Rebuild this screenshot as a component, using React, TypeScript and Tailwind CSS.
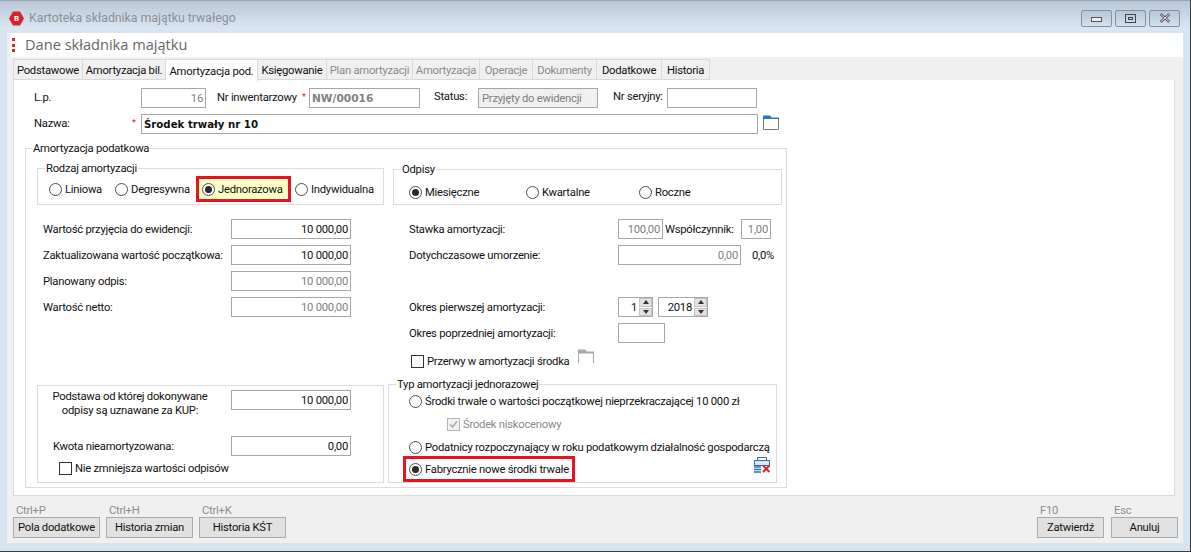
import { ReactNode } from "react";

const tabs = [
  { label: "Podstawowe", w: "w-[70px]" },
  { label: "Amortyzacja bil.", w: "w-[83px]" },
  { label: "Amortyzacja pod.", w: "w-[92px]", active: true },
  { label: "Księgowanie", w: "w-[69px]" },
  { label: "Plan amortyzacji", w: "w-[86px]", off: true },
  { label: "Amortyzacja", w: "w-[67px]", off: true },
  { label: "Operacje", w: "w-[53px]", off: true },
  { label: "Dokumenty", w: "w-[64px]", off: true },
  { label: "Dodatkowe", w: "w-[65px]" },
  { label: "Historia", w: "w-[48px]" },
];

function Radio({ on }: { on?: boolean }) {
  return (
    <span className="w-[13px] h-[13px] shrink-0 rounded-full border border-[#4d4d4d] bg-white flex items-center justify-center">
      {on && <span className="w-[7px] h-[7px] rounded-full bg-[#2a2a2a]" />}
    </span>
  );
}

function Option({ on, label, className = "" }: { on?: boolean; label: string; className?: string }) {
  return (
    <div className={`flex items-center gap-[3px] ${className}`}>
      <Radio on={on} />
      <span>{label}</span>
    </div>
  );
}

function Check({ label, checked, off }: { label: string; checked?: boolean; off?: boolean }) {
  return (
    <div className={`flex items-center gap-[3px] ${off ? "text-[#8a8a8a]" : ""}`}>
      <span className={`w-[13px] h-[13px] shrink-0 border flex items-center justify-center ${off ? "border-[#b5b5b5] bg-[#f2f2f2]" : "border-[#333333] bg-white"}`}>
        {checked && (
          <svg width="11" height="11" viewBox="0 0 11 11" fill="none">
            <path d="M2 5.5l2.5 2.5L9 2.5" stroke="#a8a8a8" strokeWidth="1.6" />
          </svg>
        )}
      </span>
      <span>{label}</span>
    </div>
  );
}

function Input({ value, w, off }: { value?: string; w: string; off?: boolean }) {
  return (
    <div className={`${w} h-[20px] shrink-0 border border-[#a6a6a6] flex items-center justify-end pr-[2px] ${off ? "text-[#808080]" : ""}`}>
      {value}
    </div>
  );
}

function Spin({ value, w }: { value: string; w: string }) {
  return (
    <div className={`${w} h-[20px] border border-[#a6a6a6] flex items-center justify-end`}>
      <span className="pr-[1px]">{value}</span>
      <div className="w-[13px] h-[18px] ml-[1px] flex flex-col gap-[1px]">
        <span className="flex-1 bg-[#e3e3e3] border border-[#c4c4c4] flex items-center justify-center">
          <span className="w-0 h-0 border-x-[3px] border-x-transparent border-b-[4px] border-b-[#333333]" />
        </span>
        <span className="flex-1 bg-[#e3e3e3] border border-[#c4c4c4] flex items-center justify-center">
          <span className="w-0 h-0 border-x-[3px] border-x-transparent border-t-[4px] border-t-[#333333]" />
        </span>
      </div>
    </div>
  );
}

function Group({ title, className, legend = "left-[7px]", children }: { title: string; className: string; legend?: string; children: ReactNode }) {
  return (
    <div className={`relative border border-[#dcdcdc] ${className}`}>
      <span className={`absolute ${legend} -top-[7px] bg-white px-[1px] leading-[13px]`}>{title}</span>
      {children}
    </div>
  );
}

function Row({ label, children, className = "" }: { label: string; children: ReactNode; className?: string }) {
  return (
    <div className={`flex items-center h-[20px] ${className}`}>
      <span className="w-[194px] pl-[6px] shrink-0">{label}</span>
      {children}
    </div>
  );
}

function BlueFolder() {
  return (
    <svg width="17" height="15" viewBox="0 0 17 15" fill="none">
      <path d="M0.5 3.5h15v11h-15z" stroke="#6d7f8d" fill="#ffffff" />
      <path d="M0 0.5h7l2 2.5H0z" fill="#2f76b8" />
      <path d="M0 2.5h16v1.5H0z" fill="#2f76b8" />
    </svg>
  );
}

function GrayFolder() {
  return (
    <svg width="16" height="14" viewBox="0 0 16 14" fill="none">
      <path d="M0.5 14V3M15.5 14V3" stroke="#a8a8a8" />
      <path d="M0 0.5h7l2 2H16v2H0z" fill="#a8a8a8" />
    </svg>
  );
}

function BottomButton({ hint, label, w }: { hint: string; label: string; w: string }) {
  return (
    <div className={`${w} flex flex-col`}>
      <span className="pl-[3px] text-[#8c8c8c] h-[14px] leading-[16px]">{hint}</span>
      <button className="h-[21px] border border-[#ababab] bg-[#e1e1e1] leading-none">{label}</button>
    </div>
  );
}

export default function App() {
  return (
    <div className="w-[1191px] h-[552px] overflow-hidden flex flex-col bg-[#d7e4f1] border-b border-r border-[#3a3a3a] text-[11.25px] tracking-[-0.25px] leading-[15px] whitespace-nowrap text-[#111111] font-['Roboto',sans-serif]">
      {/* title bar */}
      <div className="h-[30px] shrink-0 flex items-center justify-between pl-[9px] pr-[10px] pt-[5px] border-t border-[#9aa7b3] bg-gradient-to-b from-[#b9c8d8] to-[#dbe7f3]">
        <div className="flex items-center gap-[5px]">
          <div className="relative w-[15px] h-[15px]">
            <svg width="15" height="15" viewBox="0 0 15 15">
              <polygon points="4,0.5 11,0.5 15,7.5 11,14.5 4,14.5 0,7.5" fill="#d8232a" />
            </svg>
            <span className="absolute inset-0 flex items-center justify-center text-white text-[8px] font-bold">B</span>
          </div>
          <span className="text-[#8b8f94] text-[12.3px] tracking-normal">Kartoteka składnika majątku trwałego</span>
        </div>
        <div className="flex gap-[3px]">
          <button className="w-[31px] h-[17px] border border-[#8190a8] rounded-[2px] flex items-center justify-center bg-gradient-to-b from-[#b6c6d8] to-[#d3e0ee]">
            <span className="w-[11px] h-[5px] mt-[2px] border border-[#555555] bg-[#eeeeee]" />
          </button>
          <button className="w-[31px] h-[17px] border border-[#8190a8] rounded-[2px] flex items-center justify-center bg-gradient-to-b from-[#b6c6d8] to-[#d3e0ee]">
            <span className="w-[11px] h-[9px] border border-[#444444] flex items-center justify-center">
              <span className="w-[5px] h-[3px] border border-[#444444]" />
            </span>
          </button>
          <button className="w-[31px] h-[17px] border border-[#8190a8] rounded-[2px] flex items-center justify-center bg-gradient-to-b from-[#b6c6d8] to-[#d3e0ee]">
            <svg width="12" height="10" viewBox="0 0 12 10">
              <path d="M1.5 1l9 8M10.5 1l-9 8" stroke="#555566" strokeWidth="2.4" />
              <path d="M1.5 1l9 8M10.5 1l-9 8" stroke="#f2f2f2" strokeWidth="0.9" />
            </svg>
          </button>
        </div>
      </div>

      {/* client */}
      <div className="flex-1 ml-[7px] mr-[7px] mt-[3px] mb-[8px] bg-[#f0f0f0] flex flex-col">
        <div className="h-[24px] ml-[3px] bg-white flex items-center">
          <div className="flex flex-col gap-[2.5px] ml-[2px]">
            <span className="w-[3px] h-[3px] bg-[#e2231a]" />
            <span className="w-[3px] h-[3px] bg-[#e2231a]" />
            <span className="w-[3px] h-[3px] bg-[#e2231a]" />
          </div>
          <span className="ml-[10px] -mt-[2px] text-[14.6px] tracking-normal font-medium text-[#666666] font-['Open_Sans',sans-serif]">Dane składnika majątku</span>
        </div>

        {/* tabs */}
        <div className="h-[23px] ml-[6px] mr-[8px] pt-[2px] flex items-stretch">
          {tabs.map((t) => (
            <div
              key={t.label}
              className={`${t.w} shrink-0 flex items-center justify-center pt-[1px] border border-[#d9d9d9] border-l-0 first:border-l ${
                t.active ? "bg-white border-b-0 relative z-10 h-[22px]" : ""
              } ${t.off ? "text-[#8a8a8a]" : ""}`}
            >
              {t.label}
            </div>
          ))}
        </div>

        {/* panel */}
        <div className="h-[416px] ml-[6px] mr-[8px] bg-white border border-[#d9d9d9] border-t-0 pt-[8px] pl-[11px]">
          <div className="flex items-center h-[20px]">
            <span className="w-[116px] pl-[9px] -mt-[2px]">L.p.</span>
            <Input value="16" w="w-[65px]" off />
            <span className="ml-[11px] w-[85px] -mt-[2px]">Nr inwentarzowy</span>
            <span className="w-[7px] text-[#e2231a] text-[9px] -mt-[2px]">*</span>
            <div className="w-[111px] h-[20px] border border-[#a6a6a6] flex items-center pl-[2px] font-bold tracking-normal text-[#808080] text-[10.6px] font-['DejaVu_Sans',sans-serif]">NW/00016</div>
            <span className="ml-[14px] w-[44px] -mt-[3px]">Status:</span>
            <div className="w-[120px] h-[20px] border border-[#a6a6a6] bg-[#f0f0f0] pl-[3px] flex items-center text-[#808080]">Przyjęty do ewidencji</div>
            <span className="ml-[15px] w-[54px] -mt-[3px]">Nr seryjny:</span>
            <Input w="w-[90px]" />
          </div>
          <div className="flex items-center h-[20px] mt-[6px]">
            <span className="w-[107px] pl-[9px] -mt-[2px]">Nazwa:</span>
            <span className="w-[9px] text-[#e2231a] text-[9px] -mt-[2px]">*</span>
            <div className="w-[617px] h-[20px] border border-[#a6a6a6] flex items-center pl-[2px] font-bold tracking-normal font-['DejaVu_Sans',sans-serif] text-[10.2px]">Środek trwały nr 10</div>
            <span className="ml-[5px] -mt-[3px] flex">
              <BlueFolder />
            </span>
          </div>

          <Group title="Amortyzacja podatkowa" className="w-[762px] h-[340px] mt-[14px] pl-[11px] pr-[4px] pt-[19px]" legend="left-[6px]">
            <div className="flex gap-[4px]">
              {/* left column */}
              <div className="w-[347px] shrink-0 flex flex-col">
                <Group title="Rodzaj amortyzacji" className="h-[37px] flex items-center pl-[11px] pt-[5px]">
                  <Option label="Liniowa" className="w-[66px]" />
                  <Option label="Degresywna" className="w-[81px]" />
                  <div className="w-[95px] h-[26px] border-[3px] border-[#e6141e] bg-[#ffffc8] flex items-center pl-[3px] mr-[4px]">
                    <Option on label="Jednorazowa" />
                  </div>
                  <Option label="Indywidualna" />
                </Group>
                <Row label="Wartość przyjęcia do ewidencji:" className="mt-[14px]">
                  <Input value="10 000,00" w="w-[120px]" />
                </Row>
                <Row label="Zaktualizowana wartość początkowa:" className="mt-[6px]">
                  <Input value="10 000,00" w="w-[120px]" />
                </Row>
                <Row label="Planowany odpis:" className="mt-[6px]">
                  <Input value="10 000,00" w="w-[120px]" off />
                </Row>
                <Row label="Wartość netto:" className="mt-[6px]">
                  <Input value="10 000,00" w="w-[120px]" off />
                </Row>
                <div className="mt-[68px] h-[98px] border border-[#dcdcdc] pt-[4px]">
                  <div className="flex">
                    <div className="w-[193px] pr-[9px] text-center leading-[14px]">
                      Podstawa od której dokonywane
                      <br />
                      odpisy są uznawane za KUP:
                    </div>
                    <Input value="10 000,00" w="w-[120px]" />
                  </div>
                  <div className="flex items-center mt-[18px]">
                    <span className="w-[193px] pl-[15px]">Kwota nieamortyzowana:</span>
                    <Input value="0,00" w="w-[120px]" />
                  </div>
                  <div className="pl-[21px] mt-[5px]">
                    <Check label="Nie zmniejsza wartości odpisów" />
                  </div>
                </div>
              </div>

              {/* right column */}
              <div className="w-[389px] shrink-0 flex flex-col">
                <Group title="Odpisy" className="h-[36px] ml-[5px] -mr-[5px] flex items-center pl-[15px] mt-[1px] pt-[10px]">
                  <Option on label="Miesięczne" className="w-[117px]" />
                  <Option label="Kwartalne" className="w-[113px]" />
                  <Option label="Roczne" />
                </Group>
                <div className="flex items-center h-[20px] mt-[14px]">
                  <span className="w-[230px] pl-[21px]">Stawka amortyzacji:</span>
                  <Input value="100,00" w="w-[45px]" off />
                  <span className="ml-[2px] w-[76px]">Współczynnik:</span>
                  <Input value="1,00" w="w-[30px]" off />
                </div>
                <div className="flex items-center h-[20px] mt-[6px]">
                  <span className="w-[230px] pl-[21px]">Dotychczasowe umorzenie:</span>
                  <Input value="0,00" w="w-[123px]" off />
                  <span className="ml-[11px]">0,0%</span>
                </div>
                <div className="flex items-center h-[20px] mt-[32px]">
                  <span className="w-[230px] pl-[21px]">Okres pierwszej amortyzacji:</span>
                  <Spin value="1" w="w-[35px]" />
                  <span className="w-[5px]" />
                  <Spin value="2018" w="w-[50px]" />
                </div>
                <div className="flex items-center h-[20px] mt-[6px]">
                  <span className="w-[230px] pl-[21px]">Okres poprzedniej amortyzacji:</span>
                  <Input w="w-[47px]" />
                </div>
                <div className="flex items-center h-[20px] mt-[8px] pl-[23px]">
                  <Check label="Przerwy w amortyzacji środka" />
                  <span className="ml-[9px] -mt-[10px] flex">
                    <GrayFolder />
                  </span>
                </div>
                <Group title="Typ amortyzacji jednorazowej" className="h-[99px] mt-[13px] w-[389px]">
                  <div className="pl-[20px] pt-[9px]">
                    <Option label="Środki trwałe o wartości początkowej nieprzekraczającej 10 000 zł" />
                    <div className="pl-[38px] mt-[8px]">
                      <Check checked off label="Środek niskocenowy" />
                    </div>
                    <Option label="Podatnicy rozpoczynający w roku podatkowym działalność gospodarczą" className="mt-[8px]" />
                  </div>
                  <div className="flex items-start ml-[14px] mt-[1px]">
                    <div className="w-[172px] h-[26px] border-[3px] border-[#e6141e] flex items-center pl-[3px]">
                      <Option on label="Fabrycznie nowe środki trwałe" />
                    </div>
                    <svg className="ml-[178px]" width="18" height="17" viewBox="0 0 18 17" fill="none">
                      <path d="M4.5 1.5h9v3h-9z" stroke="#2a6fb0" />
                      <path d="M1.5 4.5h15v5h-15z" stroke="#2a6fb0" fill="#dbe9f5" />
                      <path d="M1 11h7M1 13.5h7M1 16h7" stroke="#2a6fb0" strokeWidth="1.5" />
                      <path d="M10 9.5l6.5 6.5M16.5 9.5L10 16" stroke="#d8281f" strokeWidth="2" />
                    </svg>
                  </div>
                </Group>
              </div>
            </div>
          </Group>
        </div>

        {/* bottom bar */}
        <div className="flex justify-between ml-[6px] mr-[5px] mt-[7px]">
          <div className="flex gap-[6px]">
            <BottomButton hint="Ctrl+P" label="Pola dodatkowe" w="w-[87px]" />
            <BottomButton hint="Ctrl+H" label="Historia zmian" w="w-[87px]" />
            <BottomButton hint="Ctrl+K" label="Historia KŚT" w="w-[87px]" />
          </div>
          <div className="flex gap-[7px]">
            <BottomButton hint="F10" label="Zatwierdź" w="w-[67px]" />
            <BottomButton hint="Esc" label="Anuluj" w="w-[67px]" />
          </div>
        </div>
      </div>
    </div>
  );
}
